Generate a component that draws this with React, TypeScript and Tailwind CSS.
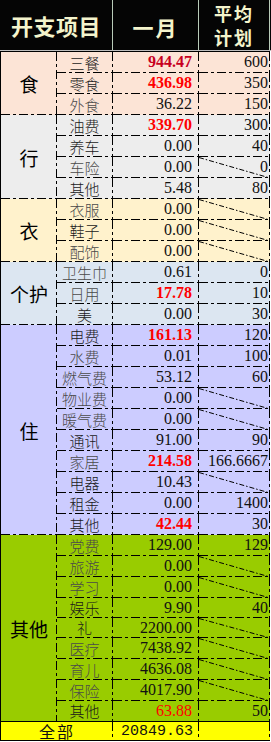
import React from "react";

type Row = {
  item: string;
  val: string;
  plan?: string;
  diag?: boolean;
  red?: "bold" | "dark" | "plain";
  light?: boolean;
  short?: boolean;
};
type Group = { name: string; bg: string; rows: Row[] };

const LINES =
  "[background-image:repeating-linear-gradient(90deg,#000_0_9px,transparent_9px_12px,#000_12px_15px,transparent_15px_18px),repeating-linear-gradient(180deg,#000_0_9px,transparent_9px_12px,#000_12px_15px,transparent_15px_18px)] [background-size:100%_1px,1px_100%] [background-position:left_bottom,right_top] [background-repeat:no-repeat]";
const RIGHT_ONLY =
  "[background-image:repeating-linear-gradient(180deg,#000_0_9px,transparent_9px_12px,#000_12px_15px,transparent_15px_18px)] [background-size:1px_100%] [background-position:right_top] [background-repeat:no-repeat]";

const CJK = "font-['Noto_Sans_CJK_SC',sans-serif]";
const SERIF = "font-['Liberation_Serif','Noto_Sans_CJK_SC',serif]";

const groups: Group[] = [
  {
    name: "食",
    bg: "bg-[#fce4d6]",
    rows: [
      { item: "三餐", val: "944.47", plan: "600", red: "dark" },
      { item: "零食", val: "436.98", plan: "350", red: "bold" },
      { item: "外食", val: "36.22", plan: "150", light: true },
    ],
  },
  {
    name: "行",
    bg: "bg-[#ededed]",
    rows: [
      { item: "油费", val: "339.70", plan: "300", red: "bold" },
      { item: "养车", val: "0.00", plan: "40" },
      { item: "车险", val: "0.00", plan: "0", diag: true, light: true },
      { item: "其他", val: "5.48", plan: "80" },
    ],
  },
  {
    name: "衣",
    bg: "bg-[#fff2cc]",
    rows: [
      { item: "衣服", val: "0.00", diag: true, light: true },
      { item: "鞋子", val: "0.00", diag: true },
      { item: "配饰", val: "0.00", diag: true, light: true },
    ],
  },
  {
    name: "个护",
    bg: "bg-[#dce6f1]",
    rows: [
      { item: "卫生巾", val: "0.61", plan: "0", light: true },
      { item: "日用", val: "17.78", plan: "10", red: "bold", light: true },
      { item: "美", val: "0.00", plan: "30" },
    ],
  },
  {
    name: "住",
    bg: "bg-[#ccccff]",
    rows: [
      { item: "电费", val: "161.13", plan: "120", red: "bold" },
      { item: "水费", val: "0.01", plan: "100", light: true },
      { item: "燃气费", val: "53.12", plan: "60", light: true },
      { item: "物业费", val: "0.00", diag: true, light: true },
      { item: "暖气费", val: "0.00", diag: true, light: true },
      { item: "通讯", val: "91.00", plan: "90" },
      { item: "家居", val: "214.58", plan: "166.6667", red: "bold", light: true },
      { item: "电器", val: "10.43", diag: true },
      { item: "租金", val: "0.00", plan: "1400" },
      { item: "其他", val: "42.44", plan: "30", red: "bold" },
    ],
  },
  {
    name: "其他",
    bg: "bg-[#99cc00]",
    rows: [
      { item: "党费", val: "129.00", plan: "129", light: true },
      { item: "旅游", val: "0.00", diag: true, light: true },
      { item: "学习", val: "0.00", diag: true, light: true },
      { item: "娱乐", val: "9.90", plan: "40", short: true },
      { item: "礼", val: "2200.00", diag: true, short: true },
      { item: "医疗", val: "7438.92", diag: true, light: true },
      { item: "育儿", val: "4636.08", diag: true, light: true },
      { item: "保险", val: "4017.90", diag: true, light: true },
      { item: "其他", val: "63.88", plan: "50", red: "plain" },
    ],
  },
];

function Diag() {
  return (
    <svg
      className="absolute inset-0 h-full w-full"
      viewBox="0 0 70 20"
      preserveAspectRatio="none"
    >
      <line
        x1="0"
        y1="0.5"
        x2="70"
        y2="20"
        stroke="#000"
        strokeWidth="1"
        strokeDasharray="5 2 1.5 2"
        vectorEffect="non-scaling-stroke"
      />
    </svg>
  );
}

function valClass(r: Row) {
  if (r.red === "dark") return "text-[#c8001e] font-bold";
  if (r.red === "bold") return "text-[#ff0000] font-bold";
  if (r.red === "plain") return "text-[#ff0000]";
  return "text-[#111]";
}

function GroupBlock({ g, last }: { g: Group; last: boolean }) {
  return (
    <div className={`flex ${g.bg}`}>
      <div
        className={`w-[56px] shrink-0 flex items-center justify-center ${
          last ? RIGHT_ONLY : LINES
        }`}
      >
        <span className={`${CJK} text-[19px] leading-none text-black`}>{g.name}</span>
      </div>
      <div className="flex flex-col">
        {g.rows.map((r, i) => {
          const isLastRow = last && i === g.rows.length - 1;
          const lines = isLastRow ? RIGHT_ONLY : LINES;
          const h = isLastRow || r.short ? "h-[20px]" : "h-[21px]";
          return (
            <div key={i} className={`flex ${h}`}>
              <div
                className={`w-[56px] flex items-center justify-center pb-px pr-px ${lines}`}
              >
                <span
                  className={`${CJK} font-light text-[15px] leading-none ${
                    r.light ? "text-[#4a4a4a]" : "text-[#1a1a1a]"
                  }`}
                >
                  {r.item}
                </span>
              </div>
              <div
                className={`w-[86px] flex items-center justify-end pr-[7px] pb-px ${lines}`}
              >
                <span className={`${SERIF} text-[16px] leading-none ${valClass(r)}`}>
                  {r.val}
                </span>
              </div>
              <div
                className={`relative w-[71px] flex items-center justify-end pr-[2px] pb-px ${lines}`}
              >
                {r.diag && <Diag />}
                {r.plan !== undefined && (
                  <span className={`${SERIF} relative text-[16px] leading-none text-[#111]`}>
                    {r.plan}
                  </span>
                )}
              </div>
            </div>
          );
        })}
      </div>
    </div>
  );
}

export default function App() {
  return (
    <div className="w-[271px] bg-white">
      {/* header */}
      <div className="flex h-[51px] bg-[#050505] border-b border-[#bdbdbd]">
        <div className="w-[113px] flex items-center justify-center border-r border-[#b9cbb9]">
          <span className={`${CJK} font-bold text-[22px] leading-none text-[#f4f4cc] tracking-[0.5px]`}>
            开支项目
          </span>
        </div>
        <div className="w-[86px] flex items-center justify-center pt-[5px] border-r border-[#b9cbb9]">
          <span className={`${CJK} font-bold text-[21px] leading-none text-[#f4f4cc] tracking-[2px]`}>
            一月
          </span>
        </div>
        <div className="w-[71px] flex flex-col items-center justify-center border-r border-[#b9cbb9]">
          <span className={`${CJK} font-bold text-[18px] leading-[24px] text-[#f4f4cc] tracking-[2px]`}>
            平均
          </span>
          <span className={`${CJK} font-bold text-[18px] leading-[24px] text-[#f4f4cc] tracking-[2px]`}>
            计划
          </span>
        </div>
      </div>
      {/* body */}
      <div className="w-[270px] border-l border-t border-black">
        {groups.map((g, i) => (
          <GroupBlock key={i} g={g} last={i === groups.length - 1} />
        ))}
        {/* total */}
        <div className="flex h-[20px] bg-[#ffff00] border-t border-b border-black">
          <div className={`w-[112px] flex items-center justify-center ${RIGHT_ONLY}`}>
            <span className={`${CJK} text-[16px] leading-none text-[#111] tracking-[2px]`}>全部</span>
          </div>
          <div className={`w-[86px] flex items-center justify-end pr-[6px] ${RIGHT_ONLY}`}>
            <span className="font-['Liberation_Mono',monospace] text-[15px] leading-none text-[#111]">
              20849.63
            </span>
          </div>
          <div className={`w-[71px] ${RIGHT_ONLY}`} />
        </div>
      </div>
    </div>
  );
}
